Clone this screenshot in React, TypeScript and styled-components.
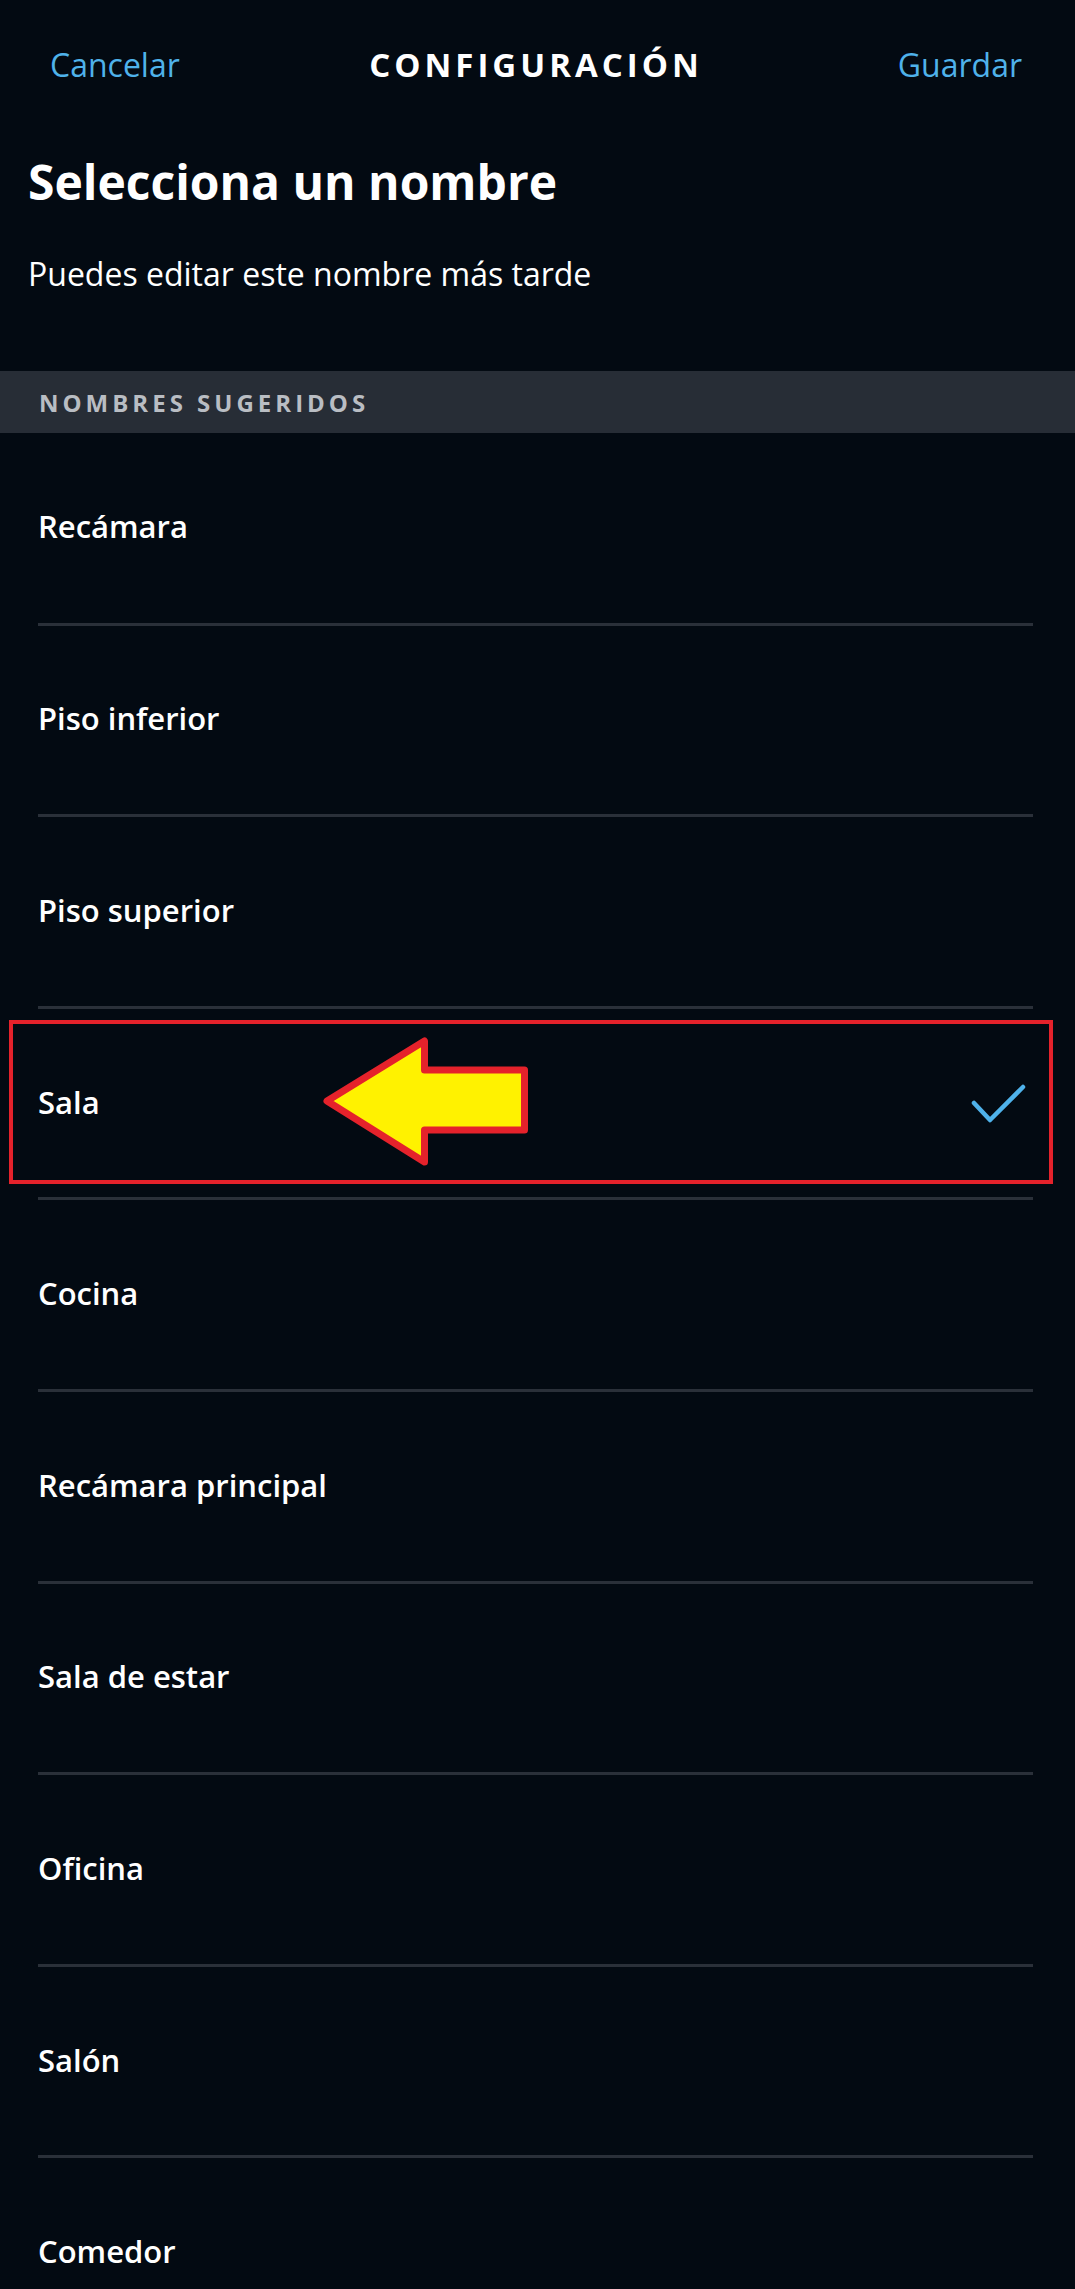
import React from "react";
import styled, { createGlobalStyle } from "styled-components";

const GlobalStyle = createGlobalStyle`
  html, body {
    margin: 0;
    padding: 0;
    background: #030a12;
  }
  body {
    font-family: "Open Sans", "Noto Sans", sans-serif;
    color: #ffffff;
  }
`;

const Page = styled.div`
  width: 1075px;
  min-height: 2289px;
  background: #030a12;
  overflow: hidden;
`;

const TopBar = styled.header`
  height: 128px;
  display: grid;
  grid-template-columns: 1fr auto 1fr;
  align-items: center;
  padding: 0 53px 0 50px;
  box-sizing: border-box;
`;

const BarAction = styled.span<{ $align: "left" | "right" }>`
  justify-self: ${(p) => (p.$align === "left" ? "start" : "end")};
  color: #4fb2ea;
  font-size: 32px;
  font-weight: 500;
`;

const BarTitle = styled.h1`
  margin: 0;
  font-size: 33px;
  font-weight: 700;
  letter-spacing: 4px;
  color: #ffffff;
`;

const Intro = styled.section`
  padding: 22px 28px 0;
  height: 243px;
  box-sizing: border-box;
`;

const Heading = styled.h2`
  margin: 0;
  font-size: 48px;
  font-weight: 700;
  line-height: 64px;
`;

const Subtitle = styled.p`
  margin: 40px 0 0;
  font-size: 32px;
  font-weight: 500;
  line-height: 40px;
`;

const SectionBand = styled.div`
  height: 62px;
  background: #272d36;
  display: flex;
  align-items: center;
  padding-left: 39px;
  color: #b9bdc3;
  font-size: 24px;
  font-weight: 700;
  letter-spacing: 4px;
`;

const List = styled.ul`
  list-style: none;
  margin: 0;
  padding: 0;
`;

const Row = styled.li<{ $first: boolean }>`
  position: relative;
  height: ${(p) => (p.$first ? "189.6px" : "188.6px")};
  display: flex;
  align-items: center;
  justify-content: space-between;
  margin: 0 42px 0 38px;
  border-top: ${(p) => (p.$first ? "none" : "3px solid #2a3039")};
  box-sizing: content-box;
  font-size: 31px;
  font-weight: 600;
`;

const Label = styled.span`
  padding-bottom: 3px;
`;

const Highlight = styled.div`
  position: absolute;
  left: -29px;
  top: 11px;
  width: 1036px;
  height: 156px;
  border: 4px solid #e5222b;
  pointer-events: none;
`;

const ArrowMark = styled.svg`
  position: absolute;
  left: 278px;
  top: 22px;
`;

const Check = styled.svg`
  margin-right: 2px;
`;

const names = [
  "Recámara",
  "Piso inferior",
  "Piso superior",
  "Sala",
  "Cocina",
  "Recámara principal",
  "Sala de estar",
  "Oficina",
  "Salón",
  "Comedor",
];

const selected = "Sala";

const App = () => {
  return (
    <Page>
      <GlobalStyle />
      <TopBar>
        <BarAction $align="left">Cancelar</BarAction>
        <BarTitle>CONFIGURACIÓN</BarTitle>
        <BarAction $align="right">Guardar</BarAction>
      </TopBar>

      <Intro>
        <Heading>Selecciona un nombre</Heading>
        <Subtitle>Puedes editar este nombre más tarde</Subtitle>
      </Intro>

      <SectionBand>NOMBRES SUGERIDOS</SectionBand>

      <List>
        {names.map((name, i) => (
          <Row key={name} $first={i === 0}>
            <Label>{name}</Label>
            {name === selected && (
              <>
                <Check width="66" height="50" viewBox="0 0 66 50">
                  <polyline
                    points="9,25 25,42 58,9"
                    fill="none"
                    stroke="#4fb2ea"
                    strokeWidth="4.5"
                    strokeLinecap="round"
                    strokeLinejoin="round"
                  />
                </Check>
                <Highlight />
                <ArrowMark width="220" height="142" viewBox="0 0 220 142">
                  <polygon
                    points="11,70 108.5,10 108.5,39 208.5,39 208.5,99 108.5,99 108.5,131"
                    fill="#fff200"
                    stroke="#e5222b"
                    strokeWidth="7"
                    strokeLinejoin="round"
                  />
                </ArrowMark>
              </>
            )}
          </Row>
        ))}
      </List>
    </Page>
  );
};

export default App;
